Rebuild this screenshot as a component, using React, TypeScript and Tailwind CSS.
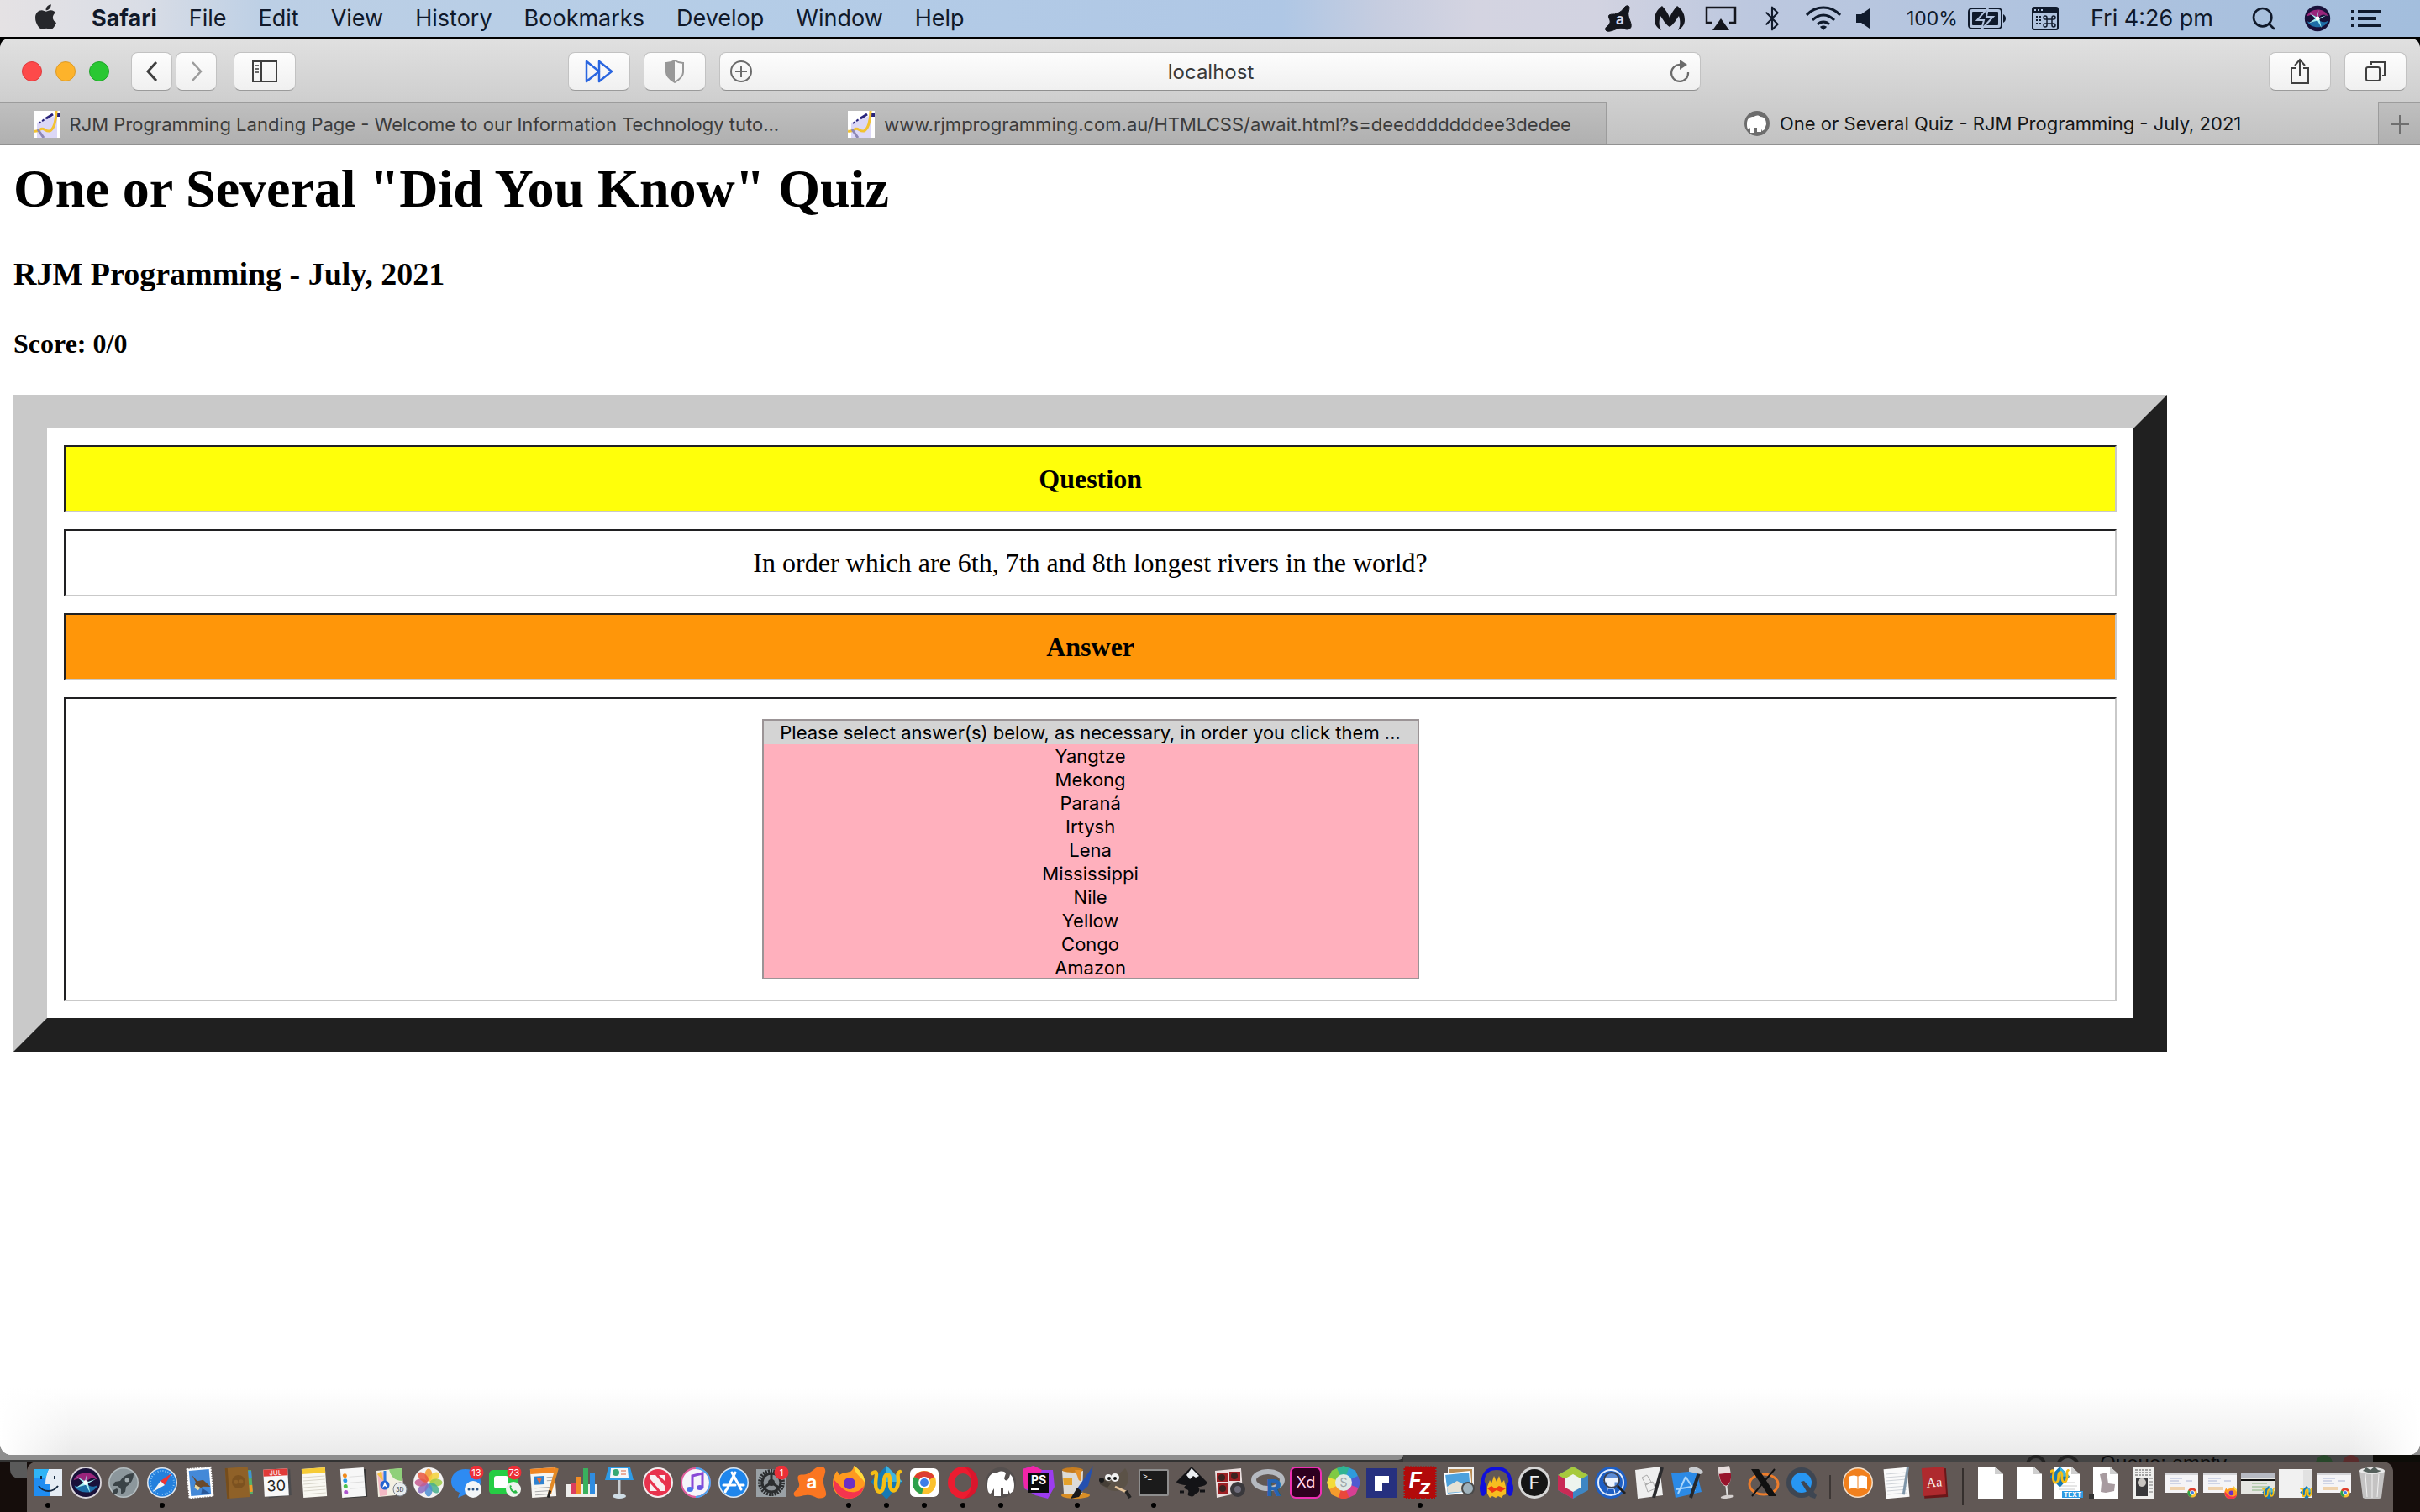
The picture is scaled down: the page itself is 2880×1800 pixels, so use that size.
import type { ReactNode } from 'react';
import { Bluetooth, Search } from 'lucide-react';
import { FaApple } from 'react-icons/fa';

const MENUS = ['File', 'Edit', 'View', 'History', 'Bookmarks', 'Develop', 'Window', 'Help'];

const RIVERS = ['Yangtze', 'Mekong', 'Paraná', 'Irtysh', 'Lena', 'Mississippi', 'Nile', 'Yellow', 'Congo', 'Amazon'];

/* ---------- menu bar ---------- */

function AvastGlyph() {
  return (
    <svg width="34" height="32" viewBox="0 0 34 32">
      <path d="M24 3c2-3 6-3 6 0 0 4-2 6-1 10 1 5 4 9 3 13-1 3-5 4-8 2-3-1-5-1-8 0-5 2-12 5-14 2-2-4 4-5 5-9 1-3-3-7-1-9 3-2 6 0 9-2 4-1 7-4 9-7z" fill="#14161d" stroke="#14161d" />
      <text x="19" y="23" textAnchor="middle" fontSize="17" fontWeight="700" fontFamily="Inter" fill="#d3d5e2">a</text>
    </svg>
  );
}

function MalwareGlyph() {
  return (
    <svg width="38" height="30" viewBox="0 0 38 30" fill="#14161d">
      <path d="M10 0c4 4 7 9 9 14 2-5 5-10 9-14 7 5 9 11 9 17 0 5-3 9-8 12 3-5 3-11 1-17-3 4-6 10-11 13-5-3-8-9-11-13-2 6-2 12 1 17-5-3-8-7-8-12C1 11 3 5 10 0z" />
    </svg>
  );
}

function AirplayGlyph() {
  return (
    <svg width="38" height="30" viewBox="0 0 38 30">
      <path d="M9 20H2V2h34v18h-7" fill="none" stroke="#14161d" strokeWidth="2.5" />
      <path d="M19 15l10 14H9z" fill="#14161d" />
    </svg>
  );
}

function WifiGlyph() {
  return (
    <svg width="42" height="30" viewBox="0 0 42 30" fill="none" stroke="#0f1a2c" strokeWidth="3">
      <path d="M1 11C12-1 30-1 41 11" />
      <path d="M8 17c8-8 18-8 26 0" />
      <path d="M14 22c4-4 10-4 14 0" />
      <path d="M17 25c2-2 6-2 8 0l-4 4z" fill="#0f1a2c" stroke="none" />
    </svg>
  );
}

function BatteryGlyph() {
  return (
    <svg width="46" height="26" viewBox="0 0 46 26">
      <rect x="1" y="1" width="39" height="24" rx="4" fill="none" stroke="#0f1a2c" strokeWidth="2" />
      <rect x="5" y="5" width="31" height="16" rx="1" fill="#0f1a2c" />
      <path d="M42 8c4 2 4 8 0 10z" fill="#0f1a2c" />
      <path d="M24 0L11 15h8l-3 11 14-15h-8z" fill="#0f1a2c" stroke="#b1c3df" strokeWidth="2" />
    </svg>
  );
}

function KeyViewerGlyph() {
  return (
    <svg width="32" height="28" viewBox="0 0 32 28">
      <rect x="1" y="1" width="30" height="26" rx="2" fill="none" stroke="#0f1a2c" strokeWidth="2" />
      <path d="M1 1h30v6H1z" fill="#0f1a2c" />
      <path d="M3 4h2M7 4h2M11 4h2" stroke="#b1c3df" strokeWidth="2" />
      <path d="M5 12h6M5 16h6M5 20h6" stroke="#0f1a2c" strokeWidth="2" strokeDasharray="2 2" />
      <path d="M18 15h6v5h-6zM18 15h-2a2 2 0 1 1 2-2zM24 15v-2a2 2 0 1 1 2 2zM24 20h2a2 2 0 1 1-2 2zM18 20v2a2 2 0 1 1-2-2z" fill="none" stroke="#0f1a2c" strokeWidth="1.5" />
    </svg>
  );
}

// rays of light over a dark ball, shared by the menu bar and the dock
const siriBall = (
  <>
    <circle cx="20" cy="20" r="19" fill="#19113a" />
    <path d="M4 17C8 5 30 2 36 17c-6-4-10-4-16 3C15 14 10 14 4 17z" fill="#c42b92" opacity=".75" />
    <path d="M5 24c3 10 25 14 31-1-6 4-11 3-16-3-5 6-10 7-15 4z" fill="#2196d6" opacity=".7" />
    <path d="M20 20L34 15 23 21l3 13-6-11L7 27l10-7-9-8 11 6 3-11z" fill="#a4eef2" />
    <circle cx="20" cy="20" r="3" fill="#fff" />
  </>
);

function MenuBar() {
  return (
    <header className="flex h-11 items-center bg-[linear-gradient(to_right,#e5e2e4_0%,#d9dde6_6%,#bccfe5_11%,#b5cde7_30%,#afc7e5_53%,#c6cde0_57%,#d4d4e1_61%,#d2d3e1_66%,#bdc8df_72%,#afc3df_85%,#a3bedd_100%)] pr-[46px] pl-[38px] text-[27px] leading-[44px] text-[#10192a]">
      <nav className="flex items-center gap-[38px]" aria-label="Menu bar">
        <button aria-label="Apple menu"><FaApple className="mb-1 h-[34px] w-[33px] text-[#26272b]" /></button>
        <button className="font-bold">Safari</button>
        {MENUS.map((m) => <button key={m}>{m}</button>)}
      </nav>
      <div className="ml-auto flex items-center">
        <span className="flex w-[61px] justify-center"><AvastGlyph /></span>
        <span className="flex w-[61px] justify-center"><MalwareGlyph /></span>
        <span className="flex w-[61px] justify-center"><AirplayGlyph /></span>
        <span className="flex w-[61px] justify-center"><Bluetooth className="h-8 w-8" strokeWidth={1.6} /></span>
        <span className="flex w-[61px] justify-center"><WifiGlyph /></span>
        <span className="flex w-14 pl-2">
          <svg width="16" height="24" viewBox="0 0 16 24"><path d="M0 7h6l10-7v24L6 17H0z" fill="#0f1a2c" /></svg>
        </span>
        <span className="mx-3 text-[23px]">100%</span>
        <BatteryGlyph />
        <span className="mr-[38px] ml-[30px]"><KeyViewerGlyph /></span>
        <time>Fri 4:26 pm</time>
        <button className="mr-8 ml-11" aria-label="Spotlight"><Search className="h-8 w-8" strokeWidth={2} /></button>
        <button className="mr-6" aria-label="Siri"><svg viewBox="0 0 40 40" className="h-8 w-8">{siriBall}</svg></button>
        <svg width="36" height="20" viewBox="0 0 36 20" stroke="#0f1a2c" strokeWidth="4">
          <path d="M0 2h4M8 2h28M0 10h4M8 10h22M0 18h4M8 18h28" />
        </svg>
      </div>
    </header>
  );
}

/* ---------- Safari window ---------- */

function ToolButton({ label, className, children }: { label: string; className: string; children: ReactNode }) {
  return (
    <button
      aria-label={label}
      className={`flex h-[46px] items-center justify-center rounded-lg border border-[#c2c2c2] border-b-[#9b9b9b] bg-linear-to-b from-[#fdfdfd] to-[#f0f0f0] ${className}`}
    >
      {children}
    </button>
  );
}

function Toolbar() {
  return (
    <div className="flex items-start gap-4 border-t border-[#f3f3f3] bg-linear-to-b from-[#e0e0e0] to-[#cecece] px-4 pt-[15px] pb-[14px]">
      <div className="flex flex-1 items-center">
        <div className="mr-[26px] ml-[10px] flex gap-4">
          <button aria-label="Close" className="h-6 w-6 rounded-full border border-[#e0383c] bg-[#fd4a4a]" />
          <button aria-label="Minimise" className="h-6 w-6 rounded-full border border-[#dd9a25] bg-[#fdb32b]" />
          <button aria-label="Zoom" className="h-6 w-6 rounded-full border border-[#1fa528] bg-[#29c732]" />
        </div>
        <ToolButton label="Back" className="mr-1 w-[49px]">
          <svg width="14" height="26" viewBox="0 0 14 26"><path d="M12 2L2 13l10 11" fill="none" stroke="#3f3f3f" strokeWidth="3" /></svg>
        </ToolButton>
        <ToolButton label="Forward" className="mr-5 w-[49px]">
          <svg width="14" height="26" viewBox="0 0 14 26"><path d="M2 2l10 11L2 24" fill="none" stroke="#9c9c9c" strokeWidth="2.5" /></svg>
        </ToolButton>
        <ToolButton label="Sidebar" className="w-[74px]">
          <svg width="32" height="26" viewBox="0 0 32 26">
            <path d="M2 1h28v24H2zM12 1v24" fill="none" stroke="#3f3f3f" strokeWidth="2" />
            <path d="M5 6h4M5 10h4M5 14h4" stroke="#6a6a6a" strokeWidth="2" />
          </svg>
        </ToolButton>
        <ToolButton label="Fast forward" className="mr-4 ml-auto w-[74px]">
          <svg width="34" height="28" viewBox="0 0 34 28" fill="none" stroke="#2a66e0" strokeWidth="2.5" strokeLinejoin="round">
            <path d="M2 2l15 12L2 26z" />
            <path d="M17 2l15 12-15 12z" />
          </svg>
        </ToolButton>
        <ToolButton label="Privacy report" className="w-[74px]">
          <svg width="24" height="28" viewBox="0 0 24 28">
            <path d="M12 1c3 2 6 3 10 3v11c0 5-5 9-10 12C7 24 2 20 2 15V4c4 0 7-1 10-3z" fill="none" stroke="#989898" strokeWidth="2" />
            <path d="M12 1v26C7 24 2 20 2 15V4c4 0 7-1 10-3z" fill="#989898" />
          </svg>
        </ToolButton>
      </div>
      <div className="flex h-[46px] w-[41%] items-center rounded-lg border border-[#c2c2c2] border-b-[#8f8f8f] bg-linear-to-b from-[#fdfdfd] to-[#f0f0f0] px-3">
        <button aria-label="Add to reading list">
          <svg width="26" height="26" viewBox="0 0 26 26" fill="none" stroke="#6b6b6b" strokeWidth="2">
            <circle cx="13" cy="13" r="12" />
            <path d="M13 6v14M6 13h14" />
          </svg>
        </button>
        <input aria-label="Address" defaultValue="localhost" className="min-w-0 flex-1 bg-transparent pt-[2px] text-center text-[24px] leading-[30px] text-[#3a3a3a] outline-none" />
        <button aria-label="Reload">
          <svg width="24" height="28" viewBox="0 0 24 28">
            <path d="M13 6a10 10 0 1 0 9 9" fill="none" stroke="#6b6b6b" strokeWidth="2.2" />
            <path d="M12 0l9 6-9 6z" fill="#6b6b6b" />
          </svg>
        </button>
      </div>
      <div className="flex flex-1 justify-end gap-4">
        <ToolButton label="Share" className="w-[74px]">
          <svg width="24" height="32" viewBox="0 0 24 32" fill="none" stroke="#3f3f3f" strokeWidth="2">
            <path d="M8 12H2v18h20V12h-6M12 21V3M6 9l6-7 6 7" />
          </svg>
        </ToolButton>
        <ToolButton label="Show tabs" className="w-[74px]">
          <svg width="26" height="26" viewBox="0 0 26 26" fill="none" stroke="#3f3f3f" strokeWidth="2">
            <rect x="2" y="8" width="16" height="16" rx="2" />
            <path d="M8 5V2h16v16h-3" />
          </svg>
        </ToolButton>
      </div>
    </div>
  );
}

function RjmFavicon() {
  return (
    <svg width="32" height="32" viewBox="0 0 32 32" className="shrink-0">
      <path d="M0 0h32v32H0z" fill="#fff" />
      <path d="M4 14l24-9v27H4z" fill="#dcd8f7" />
      <path d="M6 15l10-7" stroke="#28247c" strokeWidth="2" strokeDasharray="3 2" />
      <path d="M15 9l8-5" stroke="#28247c" strokeWidth="3" />
      <path d="M28 5h4v-3" fill="none" stroke="#28247c" strokeWidth="4" />
      <path d="M27 0c0 12-3 22-8 24-5 1-7-5-11-2-3 2-5 3-8 2" fill="none" stroke="#f2c232" strokeWidth="3" />
      <path d="M5 22l7 10" stroke="#8d88b5" strokeWidth="3" />
    </svg>
  );
}

function MampFavicon() {
  return (
    <svg width="32" height="32" viewBox="0 0 32 32" className="shrink-0">
      <circle cx="16" cy="16" r="15" fill="#6d6d6d" />
      <path d="M4 17c0-7 3-9 8-9 3-2 6-2 8 0 5 0 7 4 7 9l-2 6-3 2-1-3v4h-5v-5h-3v6h-5v-6l-2 2c-2-1-2-4-2-6z" fill="#fff" />
    </svg>
  );
}

function Tabs() {
  const idle = 'border-t border-r border-[#9c9c9c] bg-linear-to-b from-[#bfbfbf] to-[#b0b0b0] text-[#3c3c3c]';
  const tab = 'flex h-[50px] items-center justify-center gap-[11px] whitespace-nowrap';
  return (
    <div role="tablist" className="flex border-b border-[#919191] text-[22px] leading-[28px]">
      <button role="tab" aria-selected="false" className={`${tab} ${idle} w-[33.6%]`}>
        <RjmFavicon /> RJM Programming Landing Page - Welcome to our Information Technology tuto...
      </button>
      <button role="tab" aria-selected="false" className={`${tab} ${idle} w-[32.8%]`}>
        <RjmFavicon /> www.rjmprogramming.com.au/HTMLCSS/await.html?s=deedddddddee3dedee
      </button>
      <button role="tab" aria-selected="true" className={`${tab} flex-1 bg-linear-to-b from-[#cecece] to-[#c2c2c2] text-[#161616]`}>
        <MampFavicon /> One or Several Quiz - RJM Programming - July, 2021
      </button>
      <button aria-label="New tab" className="flex w-[50px] items-center justify-center border-t border-l border-[#9c9c9c] bg-linear-to-b from-[#bfbfbf] to-[#b0b0b0]">
        <svg width="22" height="22" viewBox="0 0 22 22"><path d="M11 0v22M0 11h22" stroke="#6f6f6f" strokeWidth="2" /></svg>
      </button>
    </div>
  );
}

function Quiz() {
  const cell = 'border-2 border-t-[#202022] border-r-[#c9c9c9] border-b-[#c9c9c9] border-l-[#202022] p-5';
  return (
    <main className="flex flex-1 flex-col bg-white font-['Liberation_Serif',serif] text-black">
      <div className="px-4 pt-4">
        <h1 className="text-[64px] leading-[72px] font-bold">One or Several "Did You Know" Quiz</h1>
        <h3 className="mt-[43px] text-[38px] leading-[44px] font-bold">RJM Programming - July, 2021</h3>
        <h4 className="mt-[43px] text-[32px] leading-[36px] font-bold">Score: 0/0</h4>
        <table className="mt-[43px] w-[90%] border-separate border-spacing-5 border-40 border-t-[#c9c9c9] border-r-[#202020] border-b-[#202020] border-l-[#c9c9c9] text-center text-[32px] leading-[36px]">
          <tbody>
            <tr><th className={`${cell} bg-[#ffff0a]`}>Question</th></tr>
            <tr><td className={cell}>In order which are 6th, 7th and 8th longest rivers in the world?</td></tr>
            <tr><th className={`${cell} bg-[#ff9609]`}>Answer</th></tr>
            <tr>
              <td className={cell}>
                <select
                  multiple
                  size={11}
                  aria-label="Answers"
                  className="mx-auto my-1 block h-[310px] w-[782px] overflow-hidden border-2 border-[#9b9496] bg-[#ffb0bd] p-0 font-['Inter',sans-serif] text-[22px] text-black"
                >
                  <option className="h-7 bg-[#d4d4d4] p-0 pt-px text-center">Please select answer(s) below, as necessary, in order you click them ...</option>
                  {RIVERS.map((r) => <option key={r} className="h-7 p-0 pt-px text-center">{r}</option>)}
                </select>
              </td>
            </tr>
          </tbody>
        </table>
      </div>
      <div className="mt-auto h-20 bg-[linear-gradient(to_right,#fff,transparent_3%,transparent_97%,#fff),linear-gradient(to_bottom,#fff,#f4f4f4_60%,#eaeaea)]" />
    </main>
  );
}

/* ---------- dock ---------- */

const letter = { textAnchor: 'middle' as const, fontFamily: 'Inter' };

const chromeBall = (
  <>
    <circle cx="20" cy="20" r="14" fill="#fbc12d" />
    <path d="M20 20L8 13A14 14 0 0 1 32 13z" fill="#dd3c31" />
    <path d="M20 20L8 13a14 14 0 0 0 9 21z" fill="#2da14c" />
    <circle cx="20" cy="20" r="7" fill="#fff" />
    <circle cx="20" cy="20" r="5" fill="#3d7de8" />
  </>
);

const firefoxBall = (
  <>
    <path d="M22 7c3-2 4-5 4-7 8 5 14 13 13 22-1 10-9 17-19 17S1 32 1 21C1 15 3 10 6 6l3 5c4-3 8-3 13-4z" fill="#ff9a1f" />
    <path d="M2 16c-2 14 8 23 18 23 9 0 17-6 18-15-3 5-9 8-15 7-9 0-14-8-21-15z" fill="#f5344e" />
    <path d="M26 0c8 5 14 13 13 20-4-8-11-8-13-20z" fill="#ffdc3c" />
    <circle cx="21" cy="21" r="7" fill="#6b2fc4" />
  </>
);

const wrangler = (
  <>
    <path d="M20 0l19 19-19 21L1 19z" fill="#1579b5" />
    <path d="M20 0l19 19H20z" fill="#3db4e0" />
    <path d="M3 9c8-5 4 4 4 12 0 14 10 12 10 0 0-14 8-14 7-2-1 14 9 14 10 0 0-8-2-10 2-12" fill="none" stroke="#f5bd15" strokeWidth="4.5" strokeLinecap="round" />
  </>
);

const badge = (n: string) => (
  <>
    <circle cx="31" cy="8" r="8.5" fill="#ec2f38" />
    <text x="31" y="12" fontSize="11" fill="#fff" {...letter}>{n}</text>
  </>
);

const sheet = (
  <>
    <path d="M5 1h20l10 9v29H5z" fill="#fff" />
    <path d="M25 1l10 9H25z" fill="#cfcfcf" />
  </>
);

const miniWindow = (
  <>
    <path d="M0 9h40v23H0z" fill="#f5f4f6" />
    <path d="M0 9h40v2H0z" fill="#d5d5d8" />
    <path d="M6 15h15M6 18h11M6 21h14M25 18h8" stroke="#aab3d4" />
    <path d="M6 27h18" stroke="#efd2ad" strokeWidth="4" />
  </>
);

const corner = (icon: ReactNode) => <g transform="translate(25 24) scale(.4)">{icon}</g>;

interface DockItem {
  name: string;
  running?: boolean;
  art: ReactNode;
}

const APPS: DockItem[] = [
  { name: 'Finder', running: true, art: <><path d="M3 4h34v32H3z" fill="#e6edf5" /><path d="M3 4h18c-3 6-4 12-4 18h5c0 5 0 9 1 14H3z" fill="#1f8df2" /><path d="M3 4h18c-2 4-3 7-3 10H3z" fill="#2fb4f6" /><path d="M12 12v4M28 12v4M9 24c6 8 17 8 23 0" fill="none" stroke="#15283f" strokeWidth="2" /></> },
  { name: 'Siri', art: <><circle cx="20" cy="20" r="19" fill="#d9d5da" /><g transform="translate(2 2) scale(.9)">{siriBall}</g></> },
  { name: 'Launchpad', art: <><circle cx="20" cy="20" r="18" fill="#b6bfc2" /><circle cx="20" cy="20" r="16.500" fill="#8c979c" /><path d="M32 9c-8 0-13 4-16 9l-6 1-3 5 6 0 4 4 0 6 5-3 1-6c6-4 9-9 9-16z" fill="#3a4347" /><path d="M12 27l-4 2-1 5 5-1 2-4z" fill="#3a4347" /><circle cx="24" cy="17" r="2.500" fill="#a3adb1" /></> },
  { name: 'Safari', running: true, art: <><circle cx="20" cy="20" r="18" fill="#e3e8ee" /><circle cx="20" cy="20" r="16.500" fill="#2480dd" /><circle cx="20" cy="20" r="14" fill="none" stroke="#8cc6f4" strokeWidth="2" strokeDasharray="1 2" /><path d="M31 9L23 23l-5-5z" fill="#ee3535" /><path d="M9 31l9-13 5 5z" fill="#f3f3f3" /></> },
  { name: 'Mail', art: <g transform="rotate(-5 20 20)"><path d="M6 3h28v34H6z" fill="#fff" stroke="#fff" strokeWidth="2" strokeDasharray="2 1" /><path d="M8 5h24v30H8z" fill="#4489d8" /><path d="M11 10l6 8 7-1 8 9-9-1-6 3-4-4 2-5z" fill="#6b4a2b" /><path d="M14 22l6 4-3 3-4-3z" fill="#e9d9a4" /><path d="M22 27l9 7H20z" fill="#28589b" /></g> },
  { name: 'Contacts', art: <g transform="rotate(-4 20 20)"><path d="M31 6h5v29h-5z" fill="#57b06a" /><path d="M32 7h4v9h-4z" fill="#3f93d8" /><path d="M32 24h4v8h-4z" fill="#f19a2a" /><path d="M5 2h27v36H5z" fill="#8f6128" /><path d="M5 2h3v36H5z" fill="#754d1d" /><circle cx="20" cy="19" r="8" fill="#7c5220" /><circle cx="17" cy="19" r="2.500" fill="#8f6128" /><circle cx="23" cy="19" r="2.500" fill="#8f6128" /></g> },
  { name: 'Calendar', art: <g transform="rotate(-3 20 20)"><path d="M7 5h30v31l-27 2z" fill="#4b4b4d" /><path d="M5 4h29v32H5z" fill="#f8f8f8" /><path d="M5 4h29v8H5z" fill="#e13a38" /><text x="19.500" y="11" fontSize="8" fill="#fff" {...letter}>JUL</text><text x="19.500" y="30" fontSize="18" fill="#222" {...letter}>30</text></g> },
  { name: 'Notes', art: <g transform="rotate(-4 20 20)"><path d="M6 3h28v34H6z" fill="#f9f8f2" /><path d="M6 3h28v6H6z" fill="#f6cb35" /><path d="M7 13h26M7 17h26M7 21h26M7 25h26M7 29h26M7 33h26" stroke="#d8d5ca" /></g> },
  { name: 'Reminders', art: <g transform="rotate(-4 20 20)"><path d="M8 5h28v33H8z" fill="#333" /><path d="M6 3h28v34H6z" fill="#f7f7f7" /><circle cx="11" cy="11" r="2.500" fill="#f08a1c" /><circle cx="11" cy="17" r="2.500" fill="#2c9ae8" /><circle cx="11" cy="24" r="2.500" fill="#4bc14e" /><circle cx="11" cy="31" r="2.500" fill="#ad55cf" /><path d="M16 13h17M16 20h17M16 27h17" stroke="#dedede" /></g> },
  { name: 'Maps', art: <><path d="M3 6l30-3 3 31-31 3z" fill="#f3f0e2" /><path d="M18 4l15-1 1 15c-9 0-14-5-16-14z" fill="#8fd07a" /><path d="M4 8l10-1 2 28-9 1z" fill="#f3b9c4" /><path d="M4 10l5-4 2 12z" fill="#f7c440" /><path d="M13 6v16" stroke="#2c7ee0" strokeWidth="3" /><circle cx="13" cy="23" r="5.500" fill="#2563d0" /><path d="M13 19l3 7-3-2-3 2z" fill="#fff" /><circle cx="31" cy="28" r="8" fill="#e9ecee" stroke="#7b828a" /><text x="31" y="31" fontSize="7" fill="#333" {...letter}>3D</text></> },
  { name: 'Photos', art: <><circle cx="20" cy="20" r="18" fill="#f4f2f2" />{['#f39a2c', '#f3d13a', '#9ccc45', '#46b08c', '#4d8fd3', '#8b6bc0', '#c55a8f', '#e9573f'].map((c, i) => <ellipse key={c} cx="20" cy="11" rx="4.500" ry="7.500" fill={c} opacity=".85" transform={`rotate(${i * 45} 20 20)`} />)}</> },
  { name: 'Messages', art: <><path d="M18 4c10 0 18 6 18 15s-8 15-18 15l-9 4 2-6C4 29 1 24 1 19 1 10 8 4 18 4z" fill="#2e8bf2" /><circle cx="27" cy="28" r="10" fill="#f3f6f8" /><circle cx="22" cy="28" r="1.500" fill="#2c5685" /><circle cx="27" cy="28" r="1.500" fill="#2c5685" /><circle cx="32" cy="28" r="1.500" fill="#2c5685" />{badge('13')}</> },
  { name: 'FaceTime', art: <><rect x="1" y="5" width="34" height="29" rx="5" fill="#25cd44" /><rect x="7" y="12" width="17" height="15" rx="3" fill="#fff" /><circle cx="30" cy="28" r="9" fill="#eef3ee" /><path d="M26 23c-2 5 4 12 9 9l-2-3-3 1-3-4 1-2z" fill="#28b845" />{badge('73')}</> },
  { name: 'Pages', art: <g transform="rotate(-4 20 20)"><path d="M5 3h29v34H5z" fill="#f7f5f1" /><path d="M5 3h29v6H5z" fill="#f08521" /><path d="M9 12h12v10H9z" fill="#2f82d0" /><path d="M12 14l6 1-3 6z" fill="#ee6a34" /><path d="M24 14h8M24 18h8M9 26h21M9 30h19M9 34h17" stroke="#aaa" /><path d="M37 4L26 34" stroke="#e38a25" strokeWidth="4" /><path d="M27 30l-3 8" stroke="#222" strokeWidth="3" /></g> },
  { name: 'Numbers', art: <><path d="M2 22h36v15H2z" fill="#eeeeec" /><path d="M7 20h6v14H7z" fill="#db3e5e" /><path d="M14 13h6v21h-6z" fill="#f18c25" /><path d="M22 3h6v31h-6z" fill="#39b15d" /><path d="M30 9h6v25h-6z" fill="#2f8ce0" /></> },
  { name: 'Keynote', art: <><path d="M7 2h26l4 15H3z" fill="#2d9be6" /><path d="M10 3h20l1 11H9z" fill="#f4f6f8" /><circle cx="16" cy="8" r="4" fill="#35a873" /><path d="M22 6h6M22 10h6" stroke="#d8623e" /><path d="M20 17v18" stroke="#c9cdd1" strokeWidth="3" /><ellipse cx="20" cy="36" rx="8" ry="3" fill="#cfdde6" /></> },
  { name: 'News', art: <><circle cx="20" cy="20" r="18" fill="#f4edef" /><circle cx="20" cy="20" r="16" fill="#e8334e" /><path d="M11 11h6l12 14v5h-6L11 16zM11 21v9h8zM29 19v-8h-8z" fill="#f8f0f2" /></> },
  { name: 'iTunes', art: <><circle cx="20" cy="20" r="17" fill="#f6f5fa" stroke="#e05c9c" strokeWidth="2" /><path d="M20 3a17 17 0 0 1 0 34" fill="none" stroke="#4aa6f0" strokeWidth="2" /><path d="M16 28V12l12-3v17" fill="none" stroke="#8a49d6" strokeWidth="3" /><ellipse cx="13" cy="28" rx="4" ry="3" fill="#4a76ea" /><ellipse cx="25" cy="26" rx="4" ry="3" fill="#6a55e0" /></> },
  { name: 'App Store', art: <><circle cx="20" cy="20" r="18" fill="#dfe9f3" /><circle cx="20" cy="20" r="16.500" fill="#1f86ec" /><path d="M22 8L12 28M18 8l11 20M8 23h14M27 23h5M11 29l-1 2" stroke="#fff" strokeWidth="3" strokeLinecap="round" /></> },
  { name: 'System Preferences', art: <><path d="M1 4h36v33H1z" fill="#9aa1a6" /><circle cx="19" cy="20" r="13" fill="none" stroke="#2b2d2f" strokeWidth="6" strokeDasharray="2 1" /><circle cx="19" cy="20" r="11" fill="#8b9196" stroke="#2b2d2f" strokeWidth="3" /><path d="M19 20V9M19 20l9 6M19 20l-9 6" stroke="#2b2d2f" strokeWidth="3" /><circle cx="19" cy="20" r="4" fill="#2b2d2f" />{badge('1')}</> },
  { name: 'Avast', art: <><path d="M33 1c4 0 6 3 5 7-1 5-3 8-2 13 1 6 4 10 3 14-2 4-7 4-11 3-4-2-8-4-13-3-5 0-12 4-14 0-2-5 5-6 6-11 1-4-3-8-1-12 2-3 7 0 12-3 6-3 8-8 15-8z" fill="#fb7621" /><text x="22" y="27" fontSize="22" fontWeight="700" fill="#fff" {...letter}>a</text></> },
  { name: 'Firefox', running: true, art: firefoxBall },
  { name: 'TextWrangler', running: true, art: wrangler },
  { name: 'Chrome', running: true, art: <><rect x="3" y="3" width="34" height="34" rx="6" fill="#fff" />{chromeBall}</> },
  { name: 'Opera', running: true, art: <><ellipse cx="20" cy="20" rx="14" ry="15" fill="none" stroke="#ec1c30" strokeWidth="8" /><path d="M20 1c24 0 24 38 0 38 14-5 14-33 0-38z" fill="#c8102a" opacity=".5" /></> },
  { name: 'MAMP', running: true, art: <><circle cx="20" cy="20" r="18" fill="#55504f" /><path d="M4 24c0-10 3-16 12-16 4-2 8-2 10 1l-2 6c2 5 6 2 7-5 5 4 6 14 4 20l-4 3-2-4v5h-6v-7h-3v9h-8v-9l-4 6c-3 0-4-5-4-9z" fill="#fff" /></> },
  { name: 'PhpStorm', art: <><path d="M1 4L14 0l10 5 13 0 2 20-8 14-15-4L3 27z" fill="#9c3cf0" /><path d="M1 4L14 0l10 5-12 24-9-2z" fill="#f225a8" /><path d="M8 8h24v24H8z" fill="#0b0b0d" /><text x="20" y="22" fontSize="14" fontWeight="700" fill="#fff" {...letter}>PS</text><path d="M11 28h9" stroke="#fff" strokeWidth="2" /></> },
  { name: 'Paintbrush', running: true, art: <><ellipse cx="18" cy="35" rx="17" ry="4" fill="#d98e25" /><path d="M2 6h25l-1 27H4z" fill="#dcdbd7" /><ellipse cx="14.500" cy="5" rx="12.500" ry="3" fill="#c77d1f" /><path d="M17 5h7v13c-3 0-3-4-4-6z" fill="#e5922b" /><path d="M3 14h11v9H4z" fill="#e5a22b" /><path d="M39 0L33 24l-8 7-5-4z" fill="#2450b0" /><path d="M20 26l6 5-4 6-10 2z" fill="#1a1a1a" /></> },
  { name: 'GIMP', art: <><path d="M8 13c4 0 15 0 24-10 6 8 5 18-1 23-7 7-20 4-26-3z" fill="#5b5247" /><path d="M3 15l12 6-4 5-9-4z" fill="#463f37" /><circle cx="12" cy="14" r="4" fill="#f1f1f1" /><circle cx="20" cy="14" r="5" fill="#f1f1f1" /><circle cx="13" cy="15" r="2" fill="#111" /><circle cx="20" cy="15" r="2" fill="#111" /><circle cx="4" cy="17" r="3" fill="#1a1a1a" /><path d="M20 25l13 6" stroke="#e6c59a" strokeWidth="3" /><path d="M33 30l5 8" stroke="#222" strokeWidth="4" /></> },
  { name: 'Terminal', running: true, art: <><rect x="2" y="4" width="36" height="32" rx="2" fill="#8e8e8e" /><path d="M4 6h32v28H4z" fill="#1b1b1b" /><text x="12" y="16" fontSize="10" fill="#eee" {...letter}>&gt;_</text></> },
  { name: 'Inkscape', art: <><path d="M20 1l18 18c2 4-6 6-10 6 3 3 1 8-4 8 0 3-3 4-6 3-6-1 2-6-4-8-5-1-2-4 0-5-5 0-12-2-12-4z" fill="#131316" /><path d="M20 3l9 9-4 2-3-2-4 4-4-5z" fill="#eceff2" /><path d="M6 31h5M30 30h6" stroke="#131316" strokeWidth="3" /></> },
  { name: 'Photo Booth', art: <><path d="M3 6l31-3 2 28-31 7z" fill="#eadfdf" /><path d="M5 8h13v11H5zM20 7h13v11H20zM6 21h12v12H6z" fill="#9c1f23" /><circle cx="11" cy="14" r="4" fill="#3b2320" /><circle cx="26" cy="12" r="4" fill="#3b2320" /><circle cx="12" cy="27" r="4" fill="#3b2320" /><circle cx="30" cy="28" r="9" fill="#39383c" /><circle cx="30" cy="28" r="4" fill="#6c6a78" /></> },
  { name: 'R', art: <><ellipse cx="20" cy="17" rx="17" ry="10" fill="none" stroke="#b5b9c0" strokeWidth="6" /><text x="27" y="36" fontSize="27" fontWeight="800" fill="#2464b4" {...letter}>R</text></> },
  { name: 'Adobe XD', art: <><rect x="2" y="2" width="36" height="36" rx="6" fill="#2e001f" stroke="#ef2fb4" strokeWidth="2" /><text x="20" y="26" fontSize="18" fill="#ffd9f2" {...letter}>Xd</text></> },
  { name: 'Colour Wheel', art: <>{['#e9483b', '#f39b2d', '#f3dc3a', '#7fca44', '#2fb493', '#2f9bdc', '#4f5bd0', '#d73f93'].map((c, i) => <path key={c} d="M20 20L12 3l8-3 8 3z" fill={c} transform={`rotate(${180 + i * 45} 20 20)`} />)}<circle cx="20" cy="20" r="10" fill="#dfe9e6" /><text x="20" y="25" fontSize="14" fill="#9aa5a8" {...letter}>S</text></> },
  { name: 'Flipboard', art: <><path d="M1 3h37v35H1z" fill="#26307f" /><path d="M11 12h17v9h-8v9h-9z" fill="#fff" /></> },
  { name: 'FileZilla', running: true, art: <><path d="M2 2h36v36H2z" fill="#b20a0a" stroke="#b20a0a" strokeWidth="3" strokeDasharray="2 1" /><text x="14" y="26" fontSize="25" fontWeight="700" fontStyle="italic" fill="#fff" {...letter}>F</text><text x="26" y="34" fontSize="25" fontWeight="700" fontStyle="italic" fill="#fff" {...letter}>z</text></> },
  { name: 'Preview', art: <><path d="M8 3h29v22H8z" fill="#b98b52" stroke="#eee" strokeWidth="2" /><path d="M3 10l30-3 2 24-29 3z" fill="#4da1dd" stroke="#fff" strokeWidth="2" /><path d="M6 25l12-7 15 8-1 4-25 2z" fill="#e5e1d5" /><circle cx="31" cy="27" r="7" fill="#9fb2bc" stroke="#4a4a4a" strokeWidth="2" /></> },
  { name: 'Audacity', art: <><path d="M4 25C2 10 9 3 20 3s18 7 16 22" fill="none" stroke="#1010dc" strokeWidth="4" /><ellipse cx="4" cy="27" rx="4" ry="9" fill="#1010dc" /><ellipse cx="36" cy="27" rx="4" ry="9" fill="#1010dc" /><path d="M9 25l3-8 2 4 3-9 3 7 3-7 3 9 3-4 2 8v9l-3 1-2 3-4-2-3 2-4-2-3 2-3-5z" fill="#f6bd20" /><path d="M9 27l5-3 4 3 5-3 8 3-6 4-5-2-5 3z" fill="#ee3a12" /></> },
  { name: 'FontForge', art: <><circle cx="20" cy="20" r="19" fill="#d6d6d6" /><circle cx="20" cy="20" r="16" fill="#151515" /><text x="20" y="28" fontSize="22" fill="#eee" {...letter}>F</text></> },
  { name: 'NetBeans', art: <><path d="M20 1l18 10v18L20 39 2 29V11z" fill="#3e86c4" /><path d="M20 1l18 10-18 10L2 11z" fill="#a7ca3c" /><path d="M2 11l18 10v18L2 29z" fill="#c92b55" /><path d="M20 10l9 5v11l-9 5-9-5V15z" fill="#eef4ee" /></> },
  { name: 'Directory', art: <><circle cx="20" cy="20" r="19" fill="#1e5fc4" /><circle cx="20" cy="20" r="15" fill="none" stroke="#e5eefb" strokeWidth="2" /><path d="M12 15h16v4h-4v8h-8v-8h-4zM16 28l-1 5M24 28l1 5" fill="#fff" stroke="#fff" /><circle cx="21" cy="17" r="9" fill="#cfe0f5" fillOpacity=".35" stroke="#3d4250" strokeWidth="2" /><path d="M28 24l9 9" stroke="#222" strokeWidth="3" /></> },
  { name: 'Script Editor', art: <><path d="M4 5l29-4 4 34-30 4z" fill="#efefef" /><path d="M12 14l6-3 5 8-6 4zM16 22l9-3 3 8-9 4z" fill="none" stroke="#aaa" /><path d="M36 2L26 38" stroke="#2b2b2e" strokeWidth="4" /></> },
  { name: 'Xcode', art: <><path d="M1 9l30-3 6 25-31 7z" fill="#2b8ae6" /><path d="M18 13L9 33M18 13l11 17M7 28l24-4" stroke="#a9d5fa" strokeWidth="2" /><path d="M34 8L24 38" stroke="#26282b" strokeWidth="4" /><path d="M22 3c6-3 12-1 17 4l-3 3-14-3z" fill="#c9ccd0" /></> },
  { name: 'Wine', art: <g transform="rotate(-6 20 20)"><path d="M14 1h13c2 12 0 22-6 24-6-2-9-12-7-24z" fill="#e7dddd" /><path d="M14 9h14c0 8-2 13-7 15-5-2-7-7-7-15z" fill="#97142c" /><path d="M21 24v13" stroke="#ddd" strokeWidth="2" /><ellipse cx="21" cy="37" rx="8" ry="2" fill="#d5d0cf" /></g> },
  { name: 'XQuartz', art: <><ellipse cx="20" cy="22" rx="17" ry="12" fill="none" stroke="#ee7d2b" strokeWidth="3" /><path d="M5 4h9l21 32h-9z" fill="#111" /><path d="M33 4L6 36" stroke="#111" strokeWidth="2" /></> },
  { name: 'QuickTime', art: <><circle cx="20" cy="20" r="18" fill="#3e4652" /><circle cx="20" cy="20" r="12" fill="#2796f2" /><path d="M19 19l4-1 15 17-2 4-6-2z" fill="#3e4652" /></> },
];

const TOOLS: DockItem[] = [
  { name: 'Books', art: <><circle cx="20" cy="20" r="18" fill="#f3dfca" /><circle cx="20" cy="20" r="16.500" fill="#f1801d" /><path d="M9 13c4-2 8-2 11 0 3-2 7-2 11 0v15c-4-2-8-2-11 0-3-2-7-2-11 0z" fill="#fff" /><path d="M20 13v15" stroke="#f1801d" /></> },
  { name: 'TextEdit', art: <g transform="rotate(-5 20 20)"><path d="M6 3h28v35H6z" fill="#fafafa" /><path d="M8 9h24M8 13h24M8 17h24M8 21h24M8 25h24M8 29h24M8 33h24" stroke="#cfd3d8" /><path d="M35 3l-8 32" stroke="#7e95a8" strokeWidth="3" /></g> },
  { name: 'Dictionary', art: <g transform="rotate(-4 20 20)"><path d="M7 4h28v34H7z" fill="#6b1719" /><path d="M6 2h27v33H6z" fill="#ae2a2e" /><text x="20" y="25" fontSize="16" textAnchor="middle" fontFamily="Liberation Serif" fill="#f6eded">Aa</text></g> },
];

const FILES: DockItem[] = [
  { name: 'Document', art: sheet },
  { name: 'Document copy', art: sheet },
  { name: 'Text file', art: <>{sheet}<path d="M10 20h20M10 24h22M10 28h20" stroke="#ccc" /><g transform="translate(-1 1) scale(.62)">{wrangler}</g><path d="M14 30h25v8H14z" fill="#2f9be3" /><text x="26.500" y="37" fontSize="8" fontWeight="700" fill="#fff" {...letter}>TEXT</text></> },
  { name: 'Script', art: <>{sheet}<path d="M13 10l8-2 2 13 8 1-1 8-10 2-6-1 1-11z" fill="#a89ba0" /><path d="M0 34h6v5H0z" fill="#333" /></> },
  { name: 'Article', art: <><path d="M8 2l24-1v38H8z" fill="#f0f0ee" /><path d="M10 5h20M10 8h20M10 11h20" stroke="#555" strokeDasharray="3 1" /><path d="M11 14h14v22H11z" fill="#39393b" /><circle cx="18" cy="20" r="5" fill="#c9c6c2" /><path d="M27 15h4M27 19h4M27 23h4M27 27h4M27 31h4" stroke="#777" /></> },
  { name: 'Chrome window', art: <>{miniWindow}{corner(chromeBall)}</> },
  { name: 'Firefox window', art: <>{miniWindow}{corner(firefoxBall)}</> },
  { name: 'Editor window', art: <><path d="M0 8h40v26H0z" fill="#e6e6e2" /><path d="M0 8h40v7H0z" fill="#b7bac3" /><path d="M0 17h40" stroke="#111" strokeWidth="2" /><path d="M13 21h18M13 25h20M13 29h15" stroke="#86b27e" />{corner(wrangler)}</> },
  { name: 'Blank editor window', art: <><path d="M0 4h40v34H0z" fill="#f1f1f1" /><path d="M29 5h10v32H29z" fill="#e2e2e2" />{corner(wrangler)}</> },
  { name: 'Chrome window 2', art: <>{miniWindow}{corner(chromeBall)}</> },
  { name: 'Trash', art: <><path d="M5 6h30l-4 32c-3 2-19 2-22 0z" fill="#cfcfcf" opacity=".9" /><path d="M12 10l2 27M20 10v28M28 10l-2 27" stroke="#f0f0f0" /><ellipse cx="20" cy="6" rx="15" ry="4" fill="#e9e9e9" /><path d="M9 6l4-4 5 3 5-4 4 4 4 1-8 3-8-1z" fill="#55605c" /></> },
];

function DockRow({ items }: { items: DockItem[] }) {
  return items.map((it) => (
    <button key={it.name} aria-label={it.name} className="flex h-[60px] min-w-0 flex-1 flex-col items-center gap-1 pt-[5px]">
      <svg viewBox="0 0 40 40" className="h-10 w-10">{it.art}</svg>
      {it.running && <span className="h-[6px] w-[6px] rounded-full bg-black" />}
    </button>
  ));
}

function Dock() {
  return (
    <footer>
      {/* slivers of the windows behind */}
      <div className="flex h-2 bg-[#333]">
        <div className="h-[6px] w-[58%] rounded-br-[10px] bg-[#8e8e8e]" />
        <div className="flex h-2 flex-1 items-start justify-end overflow-hidden bg-[#444] pr-4 text-[#0c0c0c]">
          <span className="mr-3 h-6 w-6 rounded-full border-4 border-[#222]" />
          <span className="mr-6 h-7 w-7 rounded-full border-4 border-[#222] bg-[#555]" />
          <span className="mr-[106px] font-['Liberation_Sans',sans-serif] text-[24px] leading-[20px]">Queue: empty</span>
          <span className="mr-3 h-5 w-5 rounded-full bg-[#27472a]" />
          <span className="h-5 w-5 rounded-full bg-[#5a2b2b]" />
        </div>
        <div className="w-14 bg-[#0d0c08]" />
      </div>
      <div className="flex bg-[#150d0b]">
        <div className="w-8 pl-3"><div className="h-5 rounded-bl-[10px] bg-[#5a5a5a]" /></div>
        <div className="flex flex-1 rounded-t-[12px] bg-[#615855] px-[2px]">
          <DockRow items={APPS} />
          <span className="mx-[10px] mt-4 h-7 w-[2px] bg-[#3d3735]" />
          <DockRow items={TOOLS} />
          <span className="mx-[10px] mt-2 h-11 w-[2px] bg-[#352f2d]" />
          <DockRow items={FILES} />
        </div>
        <div className="w-8" />
      </div>
    </footer>
  );
}

export default function App() {
  return (
    <div className="flex min-h-screen flex-col bg-black font-['Inter',sans-serif]">
      <MenuBar />
      <div className="flex flex-1 flex-col bg-linear-to-b from-black from-50% to-[#8e8e8e] to-60% pt-[2px]">
        <section className="flex flex-1 flex-col overflow-hidden rounded-t-[10px] rounded-b-[14px]">
          <Toolbar />
          <Tabs />
          <Quiz />
        </section>
      </div>
      <Dock />
    </div>
  );
}
